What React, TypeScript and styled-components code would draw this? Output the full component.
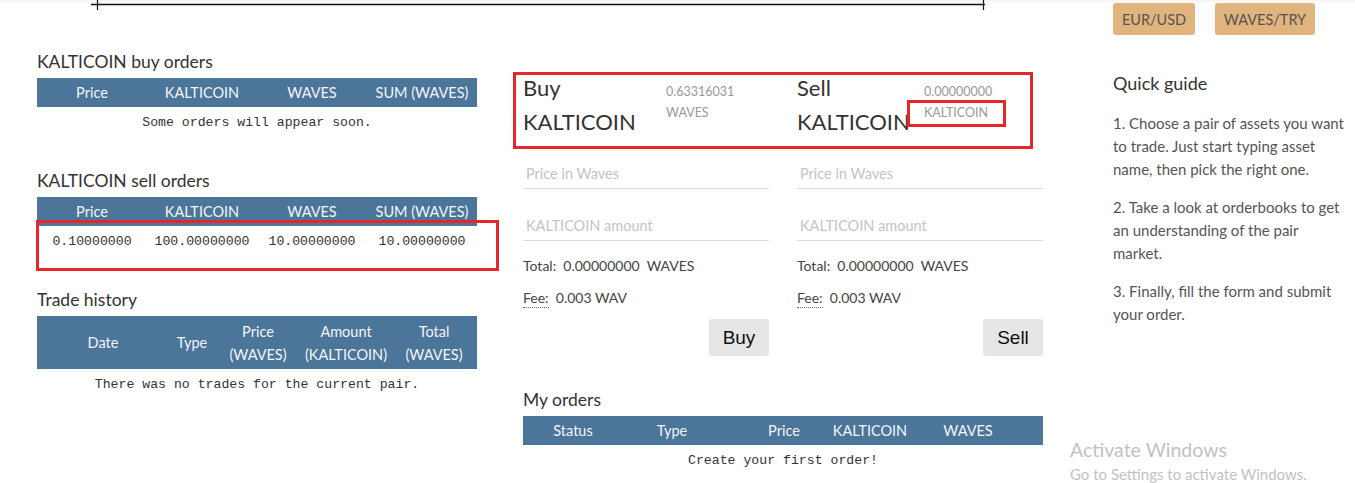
import React from 'react';
import styled, { createGlobalStyle } from 'styled-components';

const Global = createGlobalStyle`
  html, body { margin: 0; padding: 0; background: #fff; }
  body {
    font-family: Lato, "Open Sans", sans-serif;
    color: #333;
    width: 1355px;
    height: 483px;
    overflow: hidden;
  }
`;

const Page = styled.div`
  position: relative;
  display: flex;
  height: 483px;
  box-shadow: inset 0 4px 4px -3px rgba(0, 0, 0, 0.07);
`;

const Main = styled.div`
  padding-left: 37px;
  display: flex;
  flex-direction: column;
`;

const Axis = styled.svg`
  display: block;
  margin-left: 54px;
  width: 897px;
  height: 10px;
`;

const Columns = styled.div`
  display: flex;
  gap: 46px;
  align-items: flex-start;
  margin-top: 40px;
`;

const LeftCol = styled.div`
  width: 440px;
  display: flex;
  flex-direction: column;
`;

const MidCol = styled.div`
  width: 520px;
  margin-top: 21px;
  display: flex;
  flex-direction: column;
`;

const Section = styled.section<{ $mt?: number }>`
  display: flex;
  flex-direction: column;
  margin-top: ${(p) => (p.$mt !== undefined ? `${p.$mt}px` : '0')};
  & + & { margin-top: 32px; }
`;

const Heading = styled.h3`
  margin: 0;
  font-size: 17.5px;
  line-height: 24px;
  font-weight: 400;
  color: #333;
`;

const HeadRow = styled.div<{ $cols: string; $tall?: boolean }>`
  margin-top: 4px;
  display: grid;
  grid-template-columns: ${(p) => p.$cols};
  height: ${(p) => (p.$tall ? '53px' : '29px')};
  background: #4b7599;
  color: #f2f4f7;
  font-size: 14.5px;
  line-height: 23px;
`;

const HeadCell = styled.div`
  display: flex;
  align-items: center;
  justify-content: center;
  text-align: center;
  white-space: nowrap;
`;

const MonoRow = styled.div<{ $cols?: string }>`
  display: grid;
  grid-template-columns: ${(p) => p.$cols || '1fr'};
  height: 30px;
  align-items: center;
  font-family: "Liberation Mono", "DejaVu Sans Mono", monospace;
  font-size: 13.2px;
  color: #333;
`;

const MonoCell = styled.div`
  display: flex;
  justify-content: center;
  white-space: nowrap;
`;

const Forms = styled.div`
  display: flex;
  gap: 28px;
`;

const Form = styled.div`
  width: 246px;
  display: flex;
  flex-direction: column;
`;

const TitleRow = styled.div`
  display: flex;
  align-items: flex-start;
`;

const Title = styled.div<{ $w: number }>`
  width: ${(p) => p.$w}px;
  flex: none;
  font-size: 22px;
  line-height: 34px;
  color: #333;
  white-space: nowrap;
`;

const Balance = styled.div`
  margin-top: 10px;
  font-size: 12.5px;
  line-height: 21px;
  color: #999;
`;

const Field = styled.input`
  margin-top: 15px;
  & + & { margin-top: 17px; }
  display: block;
  width: 100%;
  box-sizing: border-box;
  border: none;
  border-bottom: 1px solid #dcdcdc;
  padding: 10px 3px 4px;
  font-family: inherit;
  font-size: 14.5px;
  line-height: 20px;
  color: #333;
  outline: none;
  &::placeholder { color: #c4c4c4; }
`;

const InfoLine = styled.div<{ $mt: number }>`
  margin-top: ${(p) => p.$mt}px;
  font-size: 14px;
  line-height: 20px;
  color: #444;
  white-space: pre;
`;

const Dotted = styled.span`
  display: inline-block;
  line-height: 18px;
  border-bottom: 1px dotted #666;
`;

const ActionButton = styled.button`
  align-self: flex-end;
  margin-top: 11px;
  width: 60px;
  height: 37px;
  border: none;
  border-radius: 3px;
  background: #e6e6e6;
  color: #111;
  font-family: "Liberation Sans", Arial, sans-serif;
  font-size: 19px;
`;

const Side = styled.aside`
  margin-left: 70px;
  padding-top: 3px;
  width: 237px;
  display: flex;
  flex-direction: column;
`;

const Pairs = styled.div`
  display: flex;
  gap: 20px;
`;

const PairButton = styled.button<{ $w: number }>`
  width: ${(p) => p.$w}px;
  height: 32px;
  border: none;
  border-radius: 3px;
  background: #e1b37d;
  color: #555;
  font-family: inherit;
  font-size: 14.5px;
  padding: 0;
`;

const GuideTitle = styled.h3`
  margin: 36px 0 0;
  font-size: 18px;
  line-height: 24px;
  font-weight: 400;
  color: #333;
`;

const GuideText = styled.p`
  margin: 17px 0 0;
  font-size: 15px;
  line-height: 23px;
  color: #555;
  & + & { margin-top: 15px; }
`;

const RedBox = styled.div`
  position: absolute;
  border: 3px solid #e5262b;
  box-sizing: border-box;
  pointer-events: none;
`;

const Watermark = styled.div`
  position: absolute;
  left: 1070px;
  top: 437px;
  color: #c2c2c2;
  font-size: 15px;
  line-height: 22px;
`;

const WatermarkTitle = styled.div`
  font-size: 19.5px;
  line-height: 26px;
`;

const bookCols = '110px 110px 110px 110px';
const histCols = '132px 46px 86px 90px 86px';
const myCols = '100px 98px 126px 46px 150px';

export default function App() {
  return (
    <>
      <Global />
      <Page>
        <Main>
          <Axis viewBox="0 0 897 10">
            <line x1="0" y1="4.5" x2="894" y2="4.5" stroke="#111" strokeWidth="1.5" />
            <line x1="6.5" y1="0" x2="6.5" y2="10" stroke="#111" strokeWidth="1.2" />
            <line x1="892.5" y1="0" x2="892.5" y2="10" stroke="#111" strokeWidth="1.2" />
          </Axis>
          <Columns>
            <LeftCol>
              <Section>
                <Heading>KALTICOIN buy orders</Heading>
                <HeadRow $cols={bookCols}>
                  <HeadCell>Price</HeadCell>
                  <HeadCell>KALTICOIN</HeadCell>
                  <HeadCell>WAVES</HeadCell>
                  <HeadCell>SUM (WAVES)</HeadCell>
                </HeadRow>
                <MonoRow>
                  <MonoCell>Some orders will appear soon.</MonoCell>
                </MonoRow>
              </Section>
              <Section>
                <Heading>KALTICOIN sell orders</Heading>
                <HeadRow $cols={bookCols}>
                  <HeadCell>Price</HeadCell>
                  <HeadCell>KALTICOIN</HeadCell>
                  <HeadCell>WAVES</HeadCell>
                  <HeadCell>SUM (WAVES)</HeadCell>
                </HeadRow>
                <MonoRow $cols={bookCols}>
                  <MonoCell>0.10000000</MonoCell>
                  <MonoCell>100.00000000</MonoCell>
                  <MonoCell>10.00000000</MonoCell>
                  <MonoCell>10.00000000</MonoCell>
                </MonoRow>
              </Section>
              <Section>
                <Heading>Trade history</Heading>
                <HeadRow $cols={histCols} $tall>
                  <HeadCell>Date</HeadCell>
                  <HeadCell>Type</HeadCell>
                  <HeadCell>Price<br />(WAVES)</HeadCell>
                  <HeadCell>Amount<br />(KALTICOIN)</HeadCell>
                  <HeadCell>Total<br />(WAVES)</HeadCell>
                </HeadRow>
                <MonoRow>
                  <MonoCell>There was no trades for the current pair.</MonoCell>
                </MonoRow>
              </Section>
            </LeftCol>
            <MidCol>
              <Forms>
                <Form>
                  <TitleRow>
                    <Title $w={143}>Buy<br />KALTICOIN</Title>
                    <Balance>0.63316031<br />WAVES</Balance>
                  </TitleRow>
                  <Field placeholder="Price in Waves" />
                  <Field placeholder="KALTICOIN amount" />
                  <InfoLine $mt={15}>Total:  0.00000000  WAVES</InfoLine>
                  <InfoLine $mt={12}><Dotted>Fee:</Dotted>  0.003 WAV</InfoLine>
                  <ActionButton>Buy</ActionButton>
                </Form>
                <Form>
                  <TitleRow>
                    <Title $w={127}>Sell<br />KALTICOIN</Title>
                    <Balance>0.00000000<br />KALTICOIN</Balance>
                  </TitleRow>
                  <Field placeholder="Price in Waves" />
                  <Field placeholder="KALTICOIN amount" />
                  <InfoLine $mt={15}>Total:  0.00000000  WAVES</InfoLine>
                  <InfoLine $mt={12}><Dotted>Fee:</Dotted>  0.003 WAV</InfoLine>
                  <ActionButton>Sell</ActionButton>
                </Form>
              </Forms>
              <Section $mt={32}>
                <Heading>My orders</Heading>
                <HeadRow $cols={myCols}>
                  <HeadCell>Status</HeadCell>
                  <HeadCell>Type</HeadCell>
                  <HeadCell>Price</HeadCell>
                  <HeadCell>KALTICOIN</HeadCell>
                  <HeadCell>WAVES</HeadCell>
                </HeadRow>
                <MonoRow>
                  <MonoCell>Create your first order!</MonoCell>
                </MonoRow>
              </Section>
            </MidCol>
          </Columns>
        </Main>
        <Side>
          <Pairs>
            <PairButton $w={82}>EUR/USD</PairButton>
            <PairButton $w={100}>WAVES/TRY</PairButton>
          </Pairs>
          <GuideTitle>Quick guide</GuideTitle>
          <GuideText>1. Choose a pair of assets you want to trade. Just start typing asset name, then pick the right one.</GuideText>
          <GuideText>2. Take a look at orderbooks to get an understanding of the pair market.</GuideText>
          <GuideText>3. Finally, fill the form and submit your order.</GuideText>
        </Side>
        <RedBox style={{ left: 36, top: 220, width: 463, height: 51 }} />
        <RedBox style={{ left: 513, top: 72, width: 520, height: 77 }} />
        <RedBox style={{ left: 907, top: 100, width: 99, height: 27 }} />
        <Watermark>
          <WatermarkTitle>Activate Windows</WatermarkTitle>
          Go to Settings to activate Windows.
        </Watermark>
      </Page>
    </>
  );
}
